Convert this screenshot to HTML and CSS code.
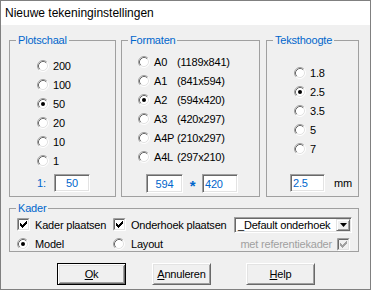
FILE: index.html
```html
<!DOCTYPE html>
<html>
<head>
<meta charset="utf-8">
<title>Nieuwe tekeninginstellingen</title>
<link rel="stylesheet" href="styles.css">
</head>
<body>
<svg class="defs" width="0" height="0" aria-hidden="true">
  <defs>
    <symbol id="rb" viewBox="0 0 12 12">
      <circle cx="6" cy="6" r="5" fill="#fff"/>
      <path d="M2.11 9.89A5.5 5.5 0 0 1 9.89 2.11" fill="none" stroke="#a0a0a0"/>
      <path d="M9.89 2.11A5.5 5.5 0 0 1 2.11 9.89" fill="none" stroke="#fff"/>
      <path d="M2.82 9.18A4.5 4.5 0 0 1 9.18 2.82" fill="none" stroke="#696969"/>
      <path d="M9.18 2.82A4.5 4.5 0 0 1 2.82 9.18" fill="none" stroke="#e3e3e3"/>
    </symbol>
    <symbol id="rbon" viewBox="0 0 12 12">
      <use href="#rb"/>
      <circle cx="6" cy="6" r="2" fill="#000"/>
    </symbol>
    <symbol id="cbbox" viewBox="0 0 13 13">
      <path d="M0.5 12.5V0.5H12.5" fill="none" stroke="#a0a0a0"/>
      <path d="M1.5 11.5V1.5H11.5" fill="none" stroke="#696969"/>
      <path d="M0.5 12.5H12.5V0.5" fill="none" stroke="#fff"/>
      <path d="M1.5 11.5H11.5V1.5" fill="none" stroke="#e3e3e3"/>
    </symbol>
    <symbol id="cb" viewBox="0 0 13 13">
      <rect x="2" y="2" width="9" height="9" fill="#fff"/>
      <use href="#cbbox"/>
      <path d="M3 5H4V6H5V7H6V6H7V5H8V4H9V3H10V6H9V7H8V8H7V9H6V10H5V9H4V8H3Z" fill="#000"/>
    </symbol>
    <symbol id="cbdis" viewBox="0 0 13 13">
      <rect x="2" y="2" width="9" height="9" fill="#f0f0f0"/>
      <use href="#cbbox"/>
      <path d="M3 5H4V6H5V7H6V6H7V5H8V4H9V3H10V6H9V7H8V8H7V9H6V10H5V9H4V8H3Z" fill="#a0a0a0"/>
    </symbol>
  </defs>
</svg>

<div class="window">
  <div class="titlebar">Nieuwe tekeninginstellingen</div>
  <div class="body">
    <div class="groups">
      <fieldset class="group plot">
        <legend>Plotschaal</legend>
        <div class="list">
          <div class="opt"><svg class="rb"><use href="#rb"/></svg><span>200</span></div>
          <div class="opt"><svg class="rb"><use href="#rb"/></svg><span>100</span></div>
          <div class="opt"><svg class="rb"><use href="#rbon"/></svg><span>50</span></div>
          <div class="opt"><svg class="rb"><use href="#rb"/></svg><span>20</span></div>
          <div class="opt"><svg class="rb"><use href="#rb"/></svg><span>10</span></div>
          <div class="opt"><svg class="rb"><use href="#rb"/></svg><span>1</span></div>
        </div>
        <div class="field">
          <span class="blue ratio">1:</span>
          <div class="input center w36">50</div>
        </div>
      </fieldset>

      <fieldset class="group formaten">
        <legend>Formaten</legend>
        <div class="list">
          <div class="opt"><svg class="rb"><use href="#rb"/></svg><span class="code">A0</span><span>(1189x841)</span></div>
          <div class="opt"><svg class="rb"><use href="#rb"/></svg><span class="code">A1</span><span>(841x594)</span></div>
          <div class="opt"><svg class="rb"><use href="#rbon"/></svg><span class="code">A2</span><span>(594x420)</span></div>
          <div class="opt"><svg class="rb"><use href="#rb"/></svg><span class="code">A3</span><span>(420x297)</span></div>
          <div class="opt"><svg class="rb"><use href="#rb"/></svg><span class="code">A4P</span><span>(210x297)</span></div>
          <div class="opt"><svg class="rb"><use href="#rb"/></svg><span class="code">A4L</span><span>(297x210)</span></div>
        </div>
        <div class="field">
          <div class="input center w37">594</div>
          <span class="blue star">*</span>
          <div class="input left w36">420</div>
        </div>
      </fieldset>

      <fieldset class="group tekst">
        <legend>Teksthoogte</legend>
        <div class="list">
          <div class="opt"><svg class="rb"><use href="#rb"/></svg><span>1.8</span></div>
          <div class="opt"><svg class="rb"><use href="#rbon"/></svg><span>2.5</span></div>
          <div class="opt"><svg class="rb"><use href="#rb"/></svg><span>3.5</span></div>
          <div class="opt"><svg class="rb"><use href="#rb"/></svg><span>5</span></div>
          <div class="opt"><svg class="rb"><use href="#rb"/></svg><span>7</span></div>
        </div>
        <div class="field">
          <div class="input left w35">2.5</div>
          <span class="unit">mm</span>
        </div>
      </fieldset>
    </div>

    <fieldset class="group kader">
      <legend>Kader</legend>
      <div class="krow r1">
        <div class="kitem first"><svg class="cb"><use href="#cb"/></svg><span>Kader plaatsen</span></div>
        <div class="kitem second"><svg class="cb"><use href="#cb"/></svg><span>Onderhoek plaatsen</span></div>
        <div class="select">
          <span class="sel-text">_Default onderhoek</span>
          <span class="sel-btn"><svg width="7" height="4" viewBox="0 0 7 4"><path d="M0 0H7L3.5 4Z" fill="#000"/></svg></span>
        </div>
      </div>
      <div class="krow r2">
        <div class="kitem first"><svg class="rb"><use href="#rbon"/></svg><span>Model</span></div>
        <div class="kitem second"><svg class="rb"><use href="#rb"/></svg><span>Layout</span></div>
        <div class="disabled"><span>met referentiekader</span><svg class="cbd"><use href="#cbdis"/></svg></div>
      </div>
    </fieldset>

    <div class="buttons">
      <button class="btn default ok"><u>O</u>k</button>
      <button class="btn cancel"><u>A</u>nnuleren</button>
      <button class="btn help"><u>H</u>elp</button>
    </div>
  </div>
</div>
</body>
</html>
```

FILE: styles.css
```css
* {
  box-sizing: border-box;
}

body {
  margin: 0;
  font-family: "Liberation Sans", Arial, sans-serif;
  font-size: 11px;
  letter-spacing: -0.2px;
  color: #000;
  background: #f0f0f0;
}

.defs {
  position: absolute;
  width: 0;
  height: 0;
  overflow: hidden;
}

.window {
  width: 371px;
  height: 290px;
  border: 1px solid #808080;
  background: #f0f0f0;
  display: flex;
  flex-direction: column;
}

.titlebar {
  height: 24px;
  line-height: 24px;
  background: #fff;
  font-size: 12px;
  letter-spacing: 0;
  padding-left: 4px;
}

.body {
  padding: 9px 11px 0 8px;
  display: flex;
  flex-direction: column;
}

.groups {
  display: flex;
  height: 163px;
}

.group {
  margin: 0;
  padding: 0 0 0 6px;
  border: 1px solid #a0a0a0;
  min-width: 0;
}

.group legend {
  padding: 0 2px;
  color: #0066cc;
  line-height: 13px;
  font-size: 11px;
}

.plot {
  width: 107px;
}

.formaten {
  width: 139px;
  margin-left: 5px;
}

.tekst {
  width: 93px;
  margin-left: 6px;
}

.list {
  display: flex;
  flex-direction: column;
}

.opt {
  display: flex;
  align-items: center;
  height: 19px;
  white-space: nowrap;
}

svg.rb {
  width: 12px;
  height: 12px;
  flex: none;
  margin-right: 4px;
}

.plot .list {
  margin: 9px 0 0 21px;
}

.formaten .list {
  margin: 5px 0 0 10px;
}

.tekst .list {
  margin: 16px 0 0 21px;
}

.code {
  width: 23px;
}

.field {
  display: flex;
  align-items: center;
}

.plot .field {
  margin: 4px 0 0 21px;
  height: 18px;
}

.formaten .field {
  margin: 8px 0 0 18px;
  height: 19px;
}

.tekst .field {
  margin: 16px 0 0 17px;
  height: 18px;
}

.blue {
  color: #0066cc;
}

.ratio {
  width: 17px;
}

.star {
  width: 19px;
  text-align: center;
  font-size: 15px;
  font-weight: bold;
  line-height: 19px;
  padding-top: 4px;
}

.unit {
  margin-left: 9px;
}

.input {
  height: 100%;
  background: #fff;
  color: #0066cc;
  border: 1px solid;
  border-color: #a0a0a0 #fff #fff #a0a0a0;
  box-shadow: inset 1px 1px 0 #696969, inset -1px -1px 0 #e3e3e3;
  display: flex;
  align-items: center;
}

.input.center {
  justify-content: center;
}

.input.left {
  padding-left: 2px;
}

.w35 { width: 35px; }
.w36 { width: 36px; }
.w37 { width: 37px; }

.kader {
  margin-top: 5px;
  height: 50px;
}

.krow {
  display: flex;
  align-items: center;
  white-space: nowrap;
}

.krow.r1 {
  margin-top: 1px;
  height: 17px;
}

.krow.r2 {
  margin-top: 4px;
  height: 14px;
}

.kitem {
  display: flex;
  align-items: center;
}

.kitem.first {
  width: 96px;
  margin-left: 1px;
}

.kitem.second {
  width: 121px;
}

svg.cb {
  width: 13px;
  height: 13px;
  flex: none;
  margin-right: 5px;
}

.r2 svg.rb {
  margin-right: 6px;
}

.select {
  width: 118px;
  height: 16px;
  background: #fff;
  border: 1px solid;
  border-color: #a0a0a0 #fff #fff #a0a0a0;
  box-shadow: inset 1px 1px 0 #696969, inset -1px -1px 0 #e3e3e3;
  display: flex;
  align-items: center;
  padding: 1px;
}

.sel-text {
  flex: 1;
  padding-left: 2px;
}

.sel-btn {
  width: 14px;
  height: 100%;
  background: #f0f0f0;
  border: 1px solid;
  border-color: #e3e3e3 #696969 #696969 #e3e3e3;
  box-shadow: inset 1px 1px 0 #fff, inset -1px -1px 0 #a0a0a0;
  display: flex;
  align-items: center;
  justify-content: center;
}

.sel-btn svg {
  display: block;
}

.disabled {
  margin-left: auto;
  margin-right: 8px;
  display: flex;
  align-items: center;
  color: #a0a0a0;
}

svg.cbd {
  width: 13px;
  height: 13px;
  margin-left: 5px;
}

.buttons {
  display: flex;
  margin-top: 11px;
}

.btn {
  height: 22px;
  padding: 0;
  font-family: "Liberation Sans", Arial, sans-serif;
  font-size: 11px;
  letter-spacing: -0.2px;
  color: #000;
  background: #f0f0f0;
  border: 1px solid;
  border-color: #fff #696969 #696969 #fff;
  box-shadow: inset 1px 1px 0 #e3e3e3, inset -1px -1px 0 #a0a0a0;
}

.btn.default {
  border-color: #000;
  box-shadow: inset 1px 1px 0 #fff, inset -1px -1px 0 #696969, inset 2px 2px 0 #e3e3e3, inset -2px -2px 0 #a0a0a0;
}

.ok {
  width: 69px;
  margin-left: 48px;
}

.cancel {
  width: 59px;
  margin-left: 26px;
}

.help {
  width: 69px;
  margin-left: 35px;
}
```
